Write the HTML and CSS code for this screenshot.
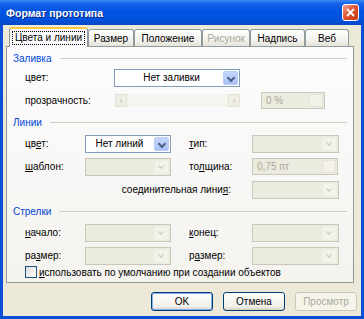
FILE: index.html
```html
<!DOCTYPE html>
<html lang="ru">

<head>
    <meta charset="UTF-8">
    <meta name="viewport" content="width=device-width, initial-scale=1.0">
    <title>Формат прототипа</title>
    <link rel="stylesheet" href="styles.css">
</head>

<body>
    <div class="window">
        <div class="titlebar">
            <span class="title">Формат прототипа</span>
            <span class="close">
                <svg width="9" height="9" viewBox="0 0 9 9">
                    <path d="M1 1 L8 8 M8 1 L1 8" stroke="#fff" stroke-width="1.8" />
                </svg>
            </span>
        </div>
        <div class="client">
            <div class="tabs">
                <div class="tab active"><span class="focus">Цвета и линии</span></div>
                <div class="tab">Размер</div>
                <div class="tab">Положение</div>
                <div class="tab disabled">Рисунок</div>
                <div class="tab">Надпись</div>
                <div class="tab">Веб</div>
            </div>
            <div class="panel">
                <div class="group">Заливка<span class="rule"></span></div>
                <div class="row">
                    <span class="lbl w89">цвет:</span>
                    <div class="combo fill">Нет заливки<span class="drop"></span></div>
                </div>
                <div class="row">
                    <span class="lbl w90">прозрачность:</span>
                    <div class="slider">
                        <span class="sbtn">&#8249;</span>
                        <span class="track"></span>
                        <span class="sbtn">&#8250;</span>
                    </div>
                    <div class="spin pct">0 %<span class="arrows"></span></div>
                </div>

                <div class="group">Линии<span class="rule"></span></div>
                <div class="row">
                    <span class="lbl w60">цв<u>е</u>т:</span>
                    <div class="combo line">Нет линий<span class="drop"></span></div>
                    <span class="lbl w63 gap"><u>т</u>ип:</span>
                    <div class="combo off right"><span class="drop"></span></div>
                </div>
                <div class="row">
                    <span class="lbl w60"><u>ш</u>аблон:</span>
                    <div class="combo off"><span class="drop"></span></div>
                    <span class="lbl w63 gap">то<u>л</u>щина:</span>
                    <div class="spin off right">0,75 пт<span class="arrows"></span></div>
                </div>
                <div class="row">
                    <span class="lbl wide">соединительная лини<u>я</u>:</span>
                    <div class="combo off right"><span class="drop"></span></div>
                </div>

                <div class="group">Стрелки<span class="rule"></span></div>
                <div class="row">
                    <span class="lbl w60"><u>н</u>ачало:</span>
                    <div class="combo off"><span class="drop"></span></div>
                    <span class="lbl w63 gap"><u>к</u>онец:</span>
                    <div class="combo off right"><span class="drop"></span></div>
                </div>
                <div class="row">
                    <span class="lbl w60">ра<u>з</u>мер:</span>
                    <div class="combo off"><span class="drop"></span></div>
                    <span class="lbl w63 gap">р<u>а</u>змер:</span>
                    <div class="combo off right"><span class="drop"></span></div>
                </div>
                <div class="check">
                    <span class="box"></span>
                    <span><u>и</u>спользовать по умолчанию при создании объектов</span>
                </div>
            </div>
            <div class="buttons">
                <button class="btn default">OK</button>
                <button class="btn">Отмена</button>
                <button class="btn" disabled>Просмотр</button>
            </div>
        </div>
    </div>
</body>

</html>
```

FILE: styles.css
```css
body {
    margin: 0;
    font-family: "Liberation Sans", Arial, sans-serif;
    font-size: 10px;
    color: #000;
    white-space: nowrap;
}

.window {
    width: 364px;
    height: 319px;
    background: #0a4fd8;
    display: flex;
    flex-direction: column;
}

.titlebar {
    height: 25px;
    display: flex;
    align-items: center;
    justify-content: space-between;
    padding: 0 5px 0 6px;
    background: linear-gradient(#3b8bf5, #1561e8 15%, #0054e3 45%, #0150dc 80%, #0a46c4);
}

.title {
    color: #fff;
    font-weight: bold;
    font-size: 10.5px;
    text-shadow: 1px 1px 0 #0a2a8a;
}

.close {
    width: 17px;
    height: 17px;
    border: 1px solid #fff;
    border-radius: 3px;
    background: linear-gradient(135deg, #f0a090, #e0502a 50%, #c23a18);
    display: flex;
    align-items: center;
    justify-content: center;
    box-sizing: border-box;
}

.client {
    flex: 1;
    margin: 0 3px 3px;
    background: #ece9d8;
    padding: 3px 0 0 3px;
}

.tabs {
    display: flex;
    height: 18px;
    align-items: flex-end;
    padding-left: 5px;
}

.tab {
    height: 17px;
    border: 1px solid #919b9c;
    border-bottom: none;
    border-radius: 3px 3px 0 0;
    background: linear-gradient(#fff, #f3f3ef 60%, #e5e4da);
    display: flex;
    align-items: center;
    justify-content: center;
    box-sizing: border-box;
}

.tab:nth-child(2) { width: 46px; }
.tab:nth-child(3) { width: 68px; }
.tab:nth-child(4) { width: 48px; }
.tab:nth-child(5) { width: 55px; }
.tab:nth-child(6) { width: 44px; }

.tab.active {
    height: 20px;
    width: 79px;
    margin-left: -2px;
    background: #fcfcfe;
    border-top: 2px solid #ffc83c;
    position: relative;
    top: 1px;
}

.focus {
    border: 1px dotted #000;
    padding: 0 2px;
    line-height: 12px;
}

.tab.disabled {
    color: #aca899;
}

.panel {
    width: 348px;
    height: 237px;
    box-sizing: border-box;
    border: 1px solid #919b9c;
    background: linear-gradient(#fcfcfe, #f4f3ee);
    padding: 3px 0 0 6px;
}

.group {
    color: #0046d5;
    height: 20px;
    display: flex;
    align-items: center;
    margin-right: 6px;
}

.group:first-child {
    height: 16px;
}

.rule {
    flex: 1;
    height: 1px;
    background: #d0d0bf;
    margin-left: 8px;
}

.row {
    height: 23px;
    display: flex;
    align-items: center;
    padding-left: 12px;
}

.lbl {
    flex: none;
}

.w89 { width: 89px; }
.w90 { width: 90px; }
.w60 { width: 60px; }
.w63 { width: 63px; }
.wide { width: 227px; text-align: right; padding-right: 21px; box-sizing: border-box; }
.gap { margin-left: 18px; }

.combo {
    width: 86px;
    height: 18px;
    box-sizing: border-box;
    border: 1px solid #7f9db9;
    background: #fff;
    display: flex;
    align-items: center;
    justify-content: center;
    padding-right: 17px;
    position: relative;
}

.combo.fill { width: 126px; padding-left: 6px; }
.right { width: 87px; }

.drop {
    position: absolute;
    right: 1px;
    top: 1px;
    bottom: 1px;
    width: 15px;
    border-radius: 2px;
    background: linear-gradient(#c6d7fc, #a8c1f6);
    border: 1px solid #b9cdf7;
    box-sizing: border-box;
}

.drop::after {
    content: "";
    position: absolute;
    left: 4px;
    top: 3px;
    width: 4px;
    height: 4px;
    border-right: 2px solid #4d6185;
    border-bottom: 2px solid #4d6185;
    transform: rotate(45deg);
}

.combo.off {
    border-color: #c9c7ba;
    background: #ecebe0;
}

.combo.off .drop {
    background: #f3f2ea;
    border-color: #eeede5;
}

.combo.off .drop::after {
    border-color: #c9c7ba;
    width: 3px;
    height: 3px;
    border-width: 1px;
}

.slider {
    width: 125px;
    height: 13px;
    display: flex;
    background: #f5f4ee;
}

.sbtn {
    width: 12px;
    height: 13px;
    box-sizing: border-box;
    border: 1px solid #e3e1d6;
    background: #f0efe6;
    color: #c8c6b8;
    font-size: 11px;
    line-height: 10px;
    text-align: center;
}

.track {
    flex: 1;
}

.spin {
    width: 86px;
    height: 17px;
    box-sizing: border-box;
    border: 1px solid #c9c7ba;
    background: #ecebe0;
    color: #aca899;
    padding-left: 4px;
    display: flex;
    align-items: center;
    position: relative;
}

.spin.pct {
    width: 64px;
    margin-left: 21px;
}

.arrows {
    position: absolute;
    right: 1px;
    top: 1px;
    bottom: 1px;
    width: 14px;
    background: #f3f2ea;
    border: 1px solid #e5e3d8;
    box-sizing: border-box;
}

.check {
    display: flex;
    align-items: center;
    padding-left: 12px;
    margin-top: -2px;
    height: 14px;
}

.box {
    width: 12px;
    height: 12px;
    box-sizing: border-box;
    border: 1px solid #1c5180;
    background: linear-gradient(135deg, #dcdcd7, #fff);
    margin-right: 2px;
}

.buttons {
    display: flex;
    justify-content: flex-end;
    gap: 10px;
    padding: 9px 4px 0 0;
}

.btn {
    width: 62px;
    height: 19px;
    font-family: inherit;
    font-size: 10px;
    border: 1px solid #003c74;
    border-radius: 3px;
    background: linear-gradient(#fff, #f0f0ea 80%, #d6d0c5);
    padding: 0;
}

.btn.default {
    box-shadow: inset 0 0 0 1px #8aacf0;
}

.btn:disabled {
    border-color: #c9c7ba;
    color: #aca899;
    background: #f5f4ea;
}
```
